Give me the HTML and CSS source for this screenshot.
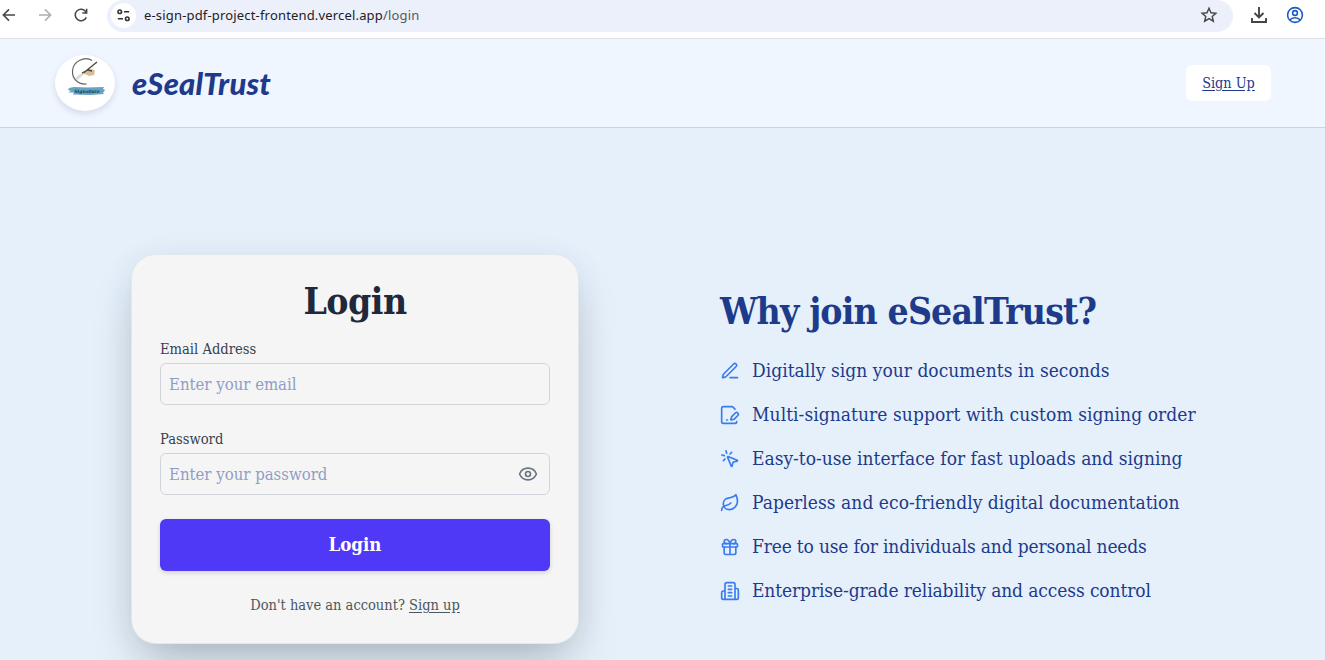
FILE: index.html
```
<!DOCTYPE html>
<html lang="en">
<head>
<meta charset="utf-8">
<title>eSealTrust – Login</title>
<link rel="stylesheet" href="styles.css">
</head>
<body>
<div class="toolbar">
  <svg class="ico back" viewBox="0 0 24 24"><path d="M21 12H4M12 3.500l-8.500 8.500 8.500 8.500"/></svg>
  <svg class="ico forward" viewBox="0 0 24 24"><path d="M3 12h17M12 3.500l8.500 8.500-8.500 8.500"/></svg>
  <svg class="ico reload" viewBox="0 0 24 24"><path d="M20 15.500A8.700 8.700 0 1 1 19.500 7.500M20.500 2.500v6.500h-6.500"/></svg>
  <div class="omnibox">
    <span class="site-info"><svg viewBox="0 0 16 16"><circle cx="4" cy="4" r="1.900"/><path d="M8.500 4H14M2 11.500h5.500"/><circle cx="12" cy="11.500" r="1.900"/></svg></span>
    <span class="url">e-sign-pdf-project-frontend.vercel.app<span class="path">/login</span></span>
    <svg class="star" viewBox="0 0 24 24"><path d="M12 3l2.700 6 6.500.600-4.900 4.300 1.500 6.400L12 16.900l-5.800 3.400 1.500-6.400-4.900-4.300 6.500-.600z"/></svg>
  </div>
  <svg class="download" viewBox="0 0 18 18"><path d="M9 1v10M4.500 7L9 11.500 13.500 7M2 12v4h14v-4"/></svg>
  <svg class="profile" viewBox="0 0 18 18"><circle cx="9" cy="9" r="7.400"/><circle cx="9" cy="7" r="2.400"/><path d="M3.800 14c2.500-3 7.900-3 10.400 0"/></svg>
</div>
<header class="header">
  <div class="brand">
    <div class="seal">
      <svg viewBox="0 0 60 56">
        <path class="ring" d="M37 5.500C30 1 18 6 17.500 16c-.500 8 6 13.500 14 13"/>
        <path class="hand" d="M27 18l5-3 5-1 3 2-1 4-5 1-4-2-4 1z"/>
        <path class="cuff" d="M20 23l5-4 3 1-5 5z"/>
        <path class="pen" d="M29 17.500L42 7M27 18l6-3 4 1"/>
        <path class="brush" d="M14 33l5-1 13 .500 17-.500-1 2 2 1-2 3 1 1-14 1-17-.500 1-2-6 0 3-1.500-3-1z"/>
        <text x="32" y="38">Signature</text>
      </svg>
    </div>
    <span class="brand-name">eSealTrust</span>
  </div>
  <a class="signup-btn">Sign Up</a>
</header>
<main class="main">
  <section class="card">
    <h1 class="card-title">Login</h1>
    <label class="label l-email">Email Address</label>
    <div class="field"><span class="ph">Enter your email</span></div>
    <label class="label l-pass">Password</label>
    <div class="field"><span class="ph">Enter your password</span>
      <svg class="eye" viewBox="0 0 24 24"><path d="M2.062 12.348a1 1 0 0 1 0-.696 10.750 10.750 0 0 1 19.876 0 1 1 0 0 1 0 .696 10.750 10.750 0 0 1-19.876 0"/><circle cx="12" cy="12" r="3"/></svg>
    </div>
    <div class="submit"><span>Login</span></div>
    <p class="hint">Don't have an account? <a>Sign up</a></p>
  </section>
  <section class="why">
    <h2 class="why-title">Why join eSealTrust?</h2>
    <ul class="list">
      <li><svg viewBox="0 0 24 24"><path d="M12 20h9M16.376 3.622a1 1 0 0 1 3.002 3.002L7.368 18.635a2 2 0 0 1-.855.506l-2.872.838a.500.500 0 0 1-.620-.620l.838-2.872a2 2 0 0 1 .506-.854z"/></svg><span class="t1">Digitally sign your documents in seconds</span></li>
      <li><svg viewBox="0 0 24 24"><path d="m18 5-2.414-2.414A2 2 0 0 0 14.172 2H4a2 2 0 0 0-2 2v16a2 2 0 0 0 2 2h14a2 2 0 0 0 2-2M21.378 12.626a1 1 0 0 0-3.004-3.004l-4.010 4.012a2 2 0 0 0-.506.854l-.837 2.870a.500.500 0 0 0 .620.620l2.870-.837a2 2 0 0 0 .854-.506zM8 18h1"/></svg><span class="t2">Multi-signature support with custom signing order</span></li>
      <li><svg viewBox="0 0 24 24"><path d="M14 4.100 12 6M5.100 8l-2.900-.800M6 12l-1.900 2M7.200 2.200 8 5.100M9.037 9.690a.498.498 0 0 1 .653-.653l11 4.500a.500.500 0 0 1-.074.949l-4.349 1.041a1 1 0 0 0-.740.739l-1.040 4.350a.500.500 0 0 1-.950.074z"/></svg><span class="t3">Easy-to-use interface for fast uploads and signing</span></li>
      <li><svg viewBox="0 0 24 24"><path d="M11 20A7 7 0 0 1 9.800 6.100C15.500 5 17 4.480 19 2c1 2 2 4.180 2 8 0 5.500-4.780 10-10 10ZM2 21c0-3 1.850-5.360 5.080-6C9.500 14.520 12 13 13 12"/></svg><span class="t4">Paperless and eco-friendly digital documentation</span></li>
      <li><svg viewBox="0 0 24 24"><rect x="3" y="8" width="18" height="4" rx="1"/><path d="M12 8v13M19 12v7a2 2 0 0 1-2 2H7a2 2 0 0 1-2-2v-7M7.500 8a2.500 2.500 0 0 1 0-5A4.800 8 0 0 1 12 8a4.800 8 0 0 1 4.500-5 2.500 2.500 0 0 1 0 5"/></svg><span class="t5">Free to use for individuals and personal needs</span></li>
      <li><svg viewBox="0 0 24 24"><path d="M6 22V4a2 2 0 0 1 2-2h8a2 2 0 0 1 2 2v18ZM6 12H4a2 2 0 0 0-2 2v6a2 2 0 0 0 2 2h2M18 9h2a2 2 0 0 1 2 2v9a2 2 0 0 1-2 2h-2M10 6h4M10 10h4M10 14h4M10 18h4"/></svg><span class="t6">Enterprise-grade reliability and access control</span></li>
    </ul>
  </section>
</main>
</body>
</html>
```
FILE: styles.css
```
* { box-sizing: border-box; }
body {
  margin: 0;
  height: 660px;
  overflow: hidden;
  display: flex;
  flex-direction: column;
  background: #e5f0fb;
  font-family: "DejaVu Serif Condensed", "DejaVu Serif", serif;
  font-stretch: condensed;
  color: #1e3a8a;
}
svg { fill: none; flex: none; }

/* browser toolbar */
.toolbar {
  height: 39px;
  flex: none;
  display: flex;
  align-items: flex-start;
  background: #fff;
  border-bottom: 1px solid #dcdfe5;
}
.ico { width: 16px; height: 16px; margin-top: 7px; stroke: #45474a; stroke-width: 2.3; }
.back { margin-left: 1px; }
.forward { margin-left: 20px; stroke: #adafb1; }
.reload { margin-left: 20px; }
.omnibox {
  width: 1126px;
  height: 32px;
  margin-left: 18px;
  padding: 0 15px 2px 4px;
  display: flex;
  align-items: center;
  background: #ebf0fa;
  border-radius: 16px;
}
.site-info {
  width: 25px;
  height: 25px;
  border-radius: 50%;
  background: #fff;
  display: flex;
  align-items: center;
  justify-content: center;
}
.site-info svg { width: 15px; height: 15px; stroke: #333; stroke-width: 1.7; }
.url { margin-left: 8px; flex: 1; font: 13px/18px "Noto Sans", "Open Sans", sans-serif; letter-spacing: .17px; color: #1f2023; white-space: nowrap; }
.path { color: #55585d; }
.star { width: 18px; height: 18px; stroke: #474747; stroke-width: 1.9; }
.download { width: 18px; height: 18px; margin: 6px 0 0 17px; stroke: #454545; stroke-width: 1.9; }
.profile { width: 18px; height: 18px; margin: 6px 0 0 18px; stroke: #1a5cc4; stroke-width: 1.6; }

/* site header */
.header {
  height: 89px;
  flex: none;
  display: flex;
  align-items: center;
  justify-content: space-between;
  padding: 0 54px 0 55px;
  background: #eff6ff;
  border-bottom: 1px solid #c3d4ea;
}
.brand { display: flex; align-items: center; gap: 17px; }
.seal {
  width: 60px;
  height: 56px;
  border-radius: 50%;
  background: #fff;
  box-shadow: 0 3px 6px rgba(60, 80, 110, .16);
}
.seal svg { width: 60px; height: 56px; display: block; }
.ring { stroke: #67625f; stroke-width: 1.2; }
.hand { fill: #d9bd94; }
.cuff { fill: #dcdcdf; }
.pen { stroke: #51443a; stroke-width: 1.3; }
.brush { fill: #64a3c2; }
.seal text { font: italic bold 4.600px "DejaVu Serif", serif; fill: #163c55; text-anchor: middle; }
.brand-name {
  font: italic 900 31px/44px Lato, sans-serif;
  letter-spacing: .2px;
}
.signup-btn {
  width: 85px;
  height: 36px;
  display: flex;
  align-items: center;
  justify-content: center;
  border-radius: 6px;
  background: #fff;
  font-size: 14.300px;
  text-decoration: underline;
  text-underline-offset: 2px;
}

/* content */
.main { flex: 1; display: flex; align-items: flex-start; padding: 127px 0 0 132px; }
.card {
  width: 446px;
  height: 388px;
  flex: none;
  padding: 26px 28px 0;
  background: #f5f5f5;
  border-radius: 24px;
  box-shadow: 0 0 0 1px #e3e8ed, 0 25px 50px -12px rgba(0, 0, 0, .25), 0 4px 32px rgba(40, 60, 90, .07);
}
.card-title {
  margin: 0 0 18px;
  height: 40px;
  text-align: center;
  font-size: 37px;
  line-height: 40px;
  letter-spacing: -.5px;
  color: #1e293b;
}
.label { display: block; height: 20px; font-size: 14.600px; line-height: 20px; color: #374151; }
.l-pass { margin-top: 24px; }
.field {
  height: 42px;
  margin-top: 4px;
  padding: 0 11px 0 8px;
  display: flex;
  align-items: center;
  justify-content: space-between;
  border: 1px solid #d1d5db;
  border-radius: 6px;
}
.ph { font-size: 16.600px; color: #909dc5; }
.eye { width: 20px; height: 20px; stroke: #6b7280; stroke-width: 2; }
.submit {
  height: 52px;
  margin-top: 24px;
  padding-bottom: 2px;
  display: flex;
  align-items: center;
  justify-content: center;
  border-radius: 6px;
  background: #4f39f6;
  box-shadow: 0 2px 5px rgba(0, 0, 0, .14);
  color: #fff;
  font-size: 18.500px;
  font-weight: bold;
}
.hint { margin: 24px 0 0; text-align: center; font-size: 14.500px; line-height: 20px; color: #4b5563; white-space: nowrap; }
.hint a { text-decoration: underline; text-underline-offset: 2px; }
.why { margin-left: 142px; padding-top: 36px; white-space: nowrap; }
.why-title { margin: 0; font-size: 37px; line-height: 40px; letter-spacing: -.850px; }
.list { list-style: none; margin: 25px 0 0; padding: 0; display: flex; flex-direction: column; gap: 16px; }
.list li { height: 28px; display: flex; align-items: center; gap: 12px; font-size: 19px; line-height: 28px; }
.list svg { width: 20px; height: 20px; margin-top: 1px; stroke: #3b7bf0; stroke-width: 2; stroke-linecap: round; stroke-linejoin: round; }
.t1 { letter-spacing: .030px; }
.t2 { letter-spacing: .060px; }
.t4 { letter-spacing: .050px; }
.t5 { letter-spacing: -.170px; }
.t6 { letter-spacing: -.110px; }
```
